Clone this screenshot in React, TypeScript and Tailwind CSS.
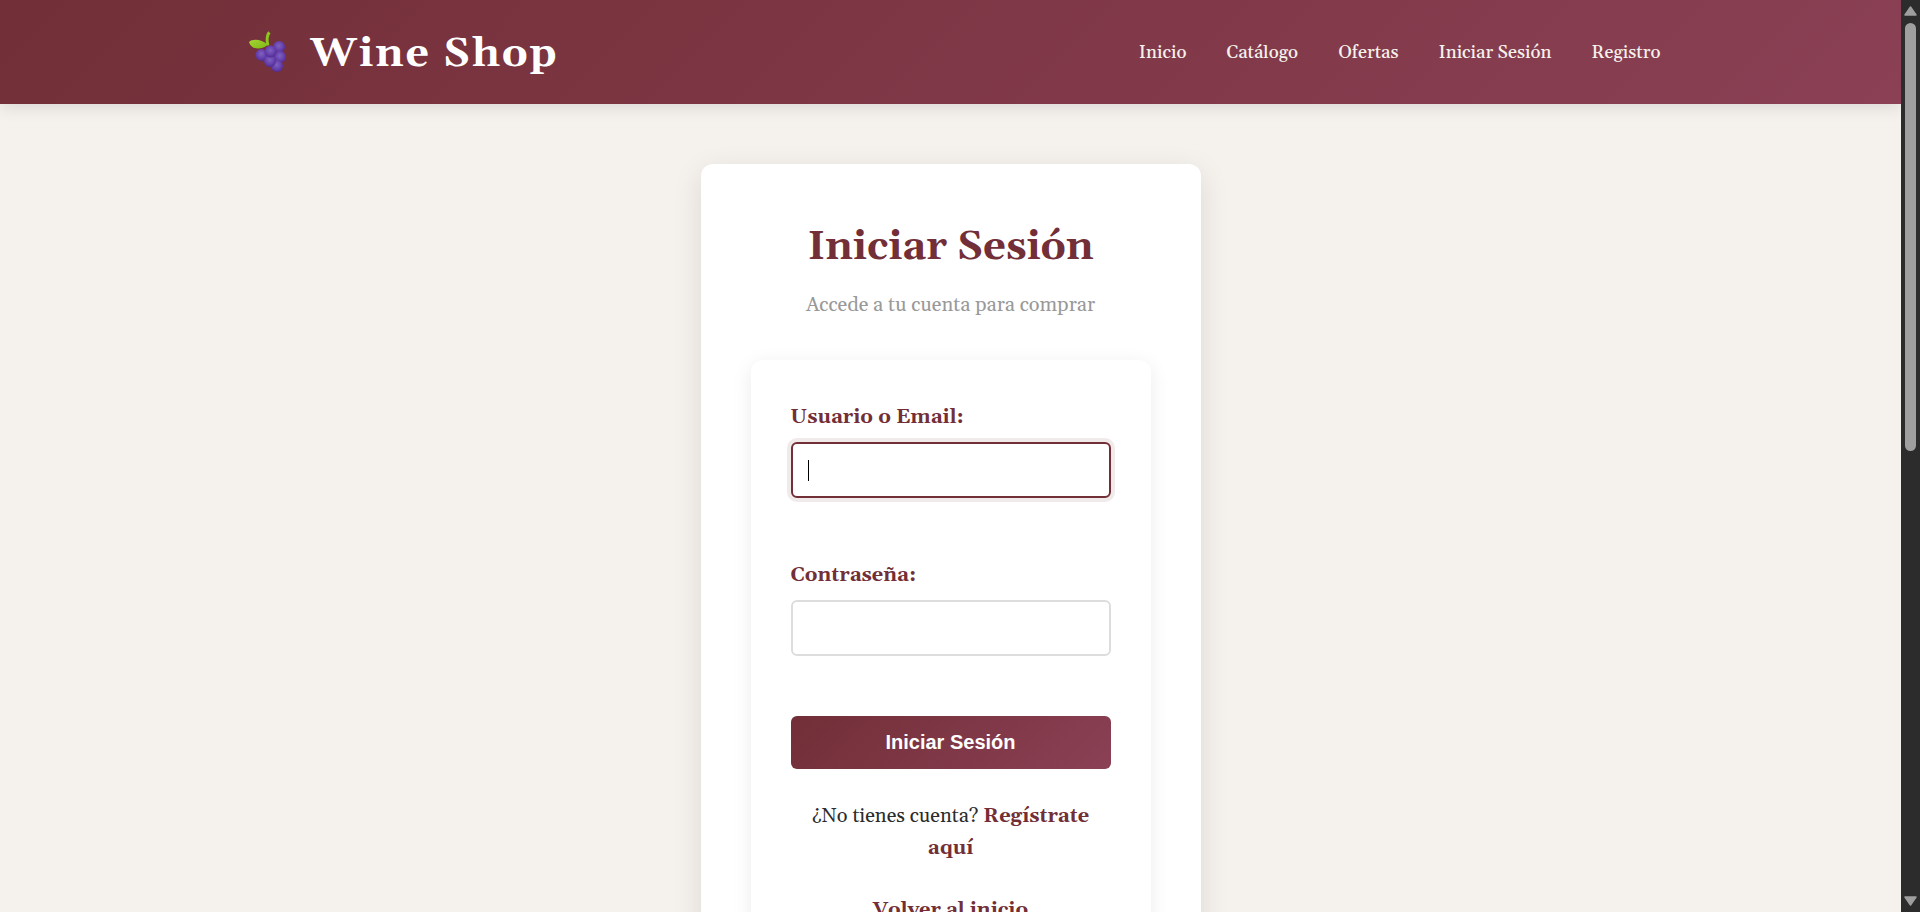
const links = ['Inicio', 'Catálogo', 'Ofertas', 'Iniciar Sesión', 'Registro'];

const berries = [
  [32, 17],
  [33, 27],
  [14.5, 25],
  [30, 36],
  [23, 31],
  [23.5, 21.5],
];

function Grapes() {
  return (
    <svg viewBox="0 0 40 44" className="h-11 w-10" aria-hidden="true">
      <defs>
        <radialGradient id="berry" cx="0.48" cy="0.4" r="0.62">
          <stop offset="0" stopColor="#7f62c0" />
          <stop offset="0.6" stopColor="#6640ab" />
          <stop offset="1" stopColor="#4f2a93" />
        </radialGradient>
        <linearGradient id="leaf" x1="0" y1="0" x2="1" y2="1">
          <stop offset="0" stopColor="#a5d335" />
          <stop offset="1" stopColor="#7fb914" />
        </linearGradient>
      </defs>
      {berries.map(([x, y]) => (
        <circle key={`${x}-${y}`} cx={x} cy={y} r="6" fill="url(#berry)" />
      ))}
      <path d="M2 12C5 8.500 15 9 20.500 14.500C16 20 4 20.500 2 12Z" fill="url(#leaf)" />
      <path d="M20.800 15.500C19.500 9.500 20 5 22.300 2.200" fill="none" stroke="#8cc51e" strokeWidth="3" />
    </svg>
  );
}

const label = 'block text-[20px] leading-[34px] font-bold text-[#722f37]';
const field =
  'block h-14 w-full rounded-md border-2 border-[#ddd] bg-white px-[15px] text-lg text-black outline-none focus:border-[#722f37] focus:shadow-[0_0_0_4px_rgba(114,47,55,0.1)]';

export default function App() {
  return (
    <div className="flex h-screen bg-[#f5f1ed] font-[Gelasio,Georgia,'Liberation_Serif',serif] text-[#2c2c2c]">
      <div className="min-w-0 flex-1 overflow-y-auto [scrollbar-width:none]">
        <header className="relative bg-linear-135 from-[#722f37] to-[#8b4055] shadow-[0_4px_15px_rgba(0,0,0,0.1)]">
          <div className="mx-auto flex h-26 max-w-[1500px] items-center justify-between px-10">
            <a href="#inicio" className="flex items-center gap-6 pl-1.5 text-white">
              <Grapes />
              <span className="pt-1 text-[41px] leading-none font-bold tracking-[2px]">Wine Shop</span>
            </a>
            <nav className="flex gap-10 pt-0.5 text-[18px] leading-8 font-medium text-[#f5f1eb]">
              {links.map((text) => (
                <a key={text} href="#seccion">
                  {text}
                </a>
              ))}
            </nav>
          </div>
        </header>
        <main className="px-5 py-15">
          <section className="mx-auto max-w-[500px] rounded-xl bg-white p-[50px] shadow-[0_8px_30px_rgba(0,0,0,0.1)]">
            <h1 className="text-center text-[40px] leading-17 font-bold text-[#722f37]">Iniciar Sesión</h1>
            <p className="mt-1.5 text-center text-[20px] leading-[34px] text-[#999]">Accede a tu cuenta para comprar</p>
            <form className="mt-[38px] rounded-xl bg-white p-10 shadow-[0_4px_20px_rgba(0,0,0,0.08)]">
              <label htmlFor="user" className={label}>
                Usuario o Email:
              </label>
              <div className="relative mt-2">
                <input id="user" type="text" autoFocus className={`caret-transparent ${field}`} />
                <span className="pointer-events-none absolute top-[18px] left-[17px] h-[21px] w-px bg-black" />
              </div>
              <label htmlFor="password" className={`mt-15 ${label}`}>
                Contraseña:
              </label>
              <div className="mt-2">
                <input id="password" type="password" className={field} />
              </div>
              <button
                type="button"
                className="mt-15 block h-[53px] w-full rounded-md bg-linear-135 from-[#722f37] to-[#8b4055] pb-0.5 font-['Liberation_Sans',Arial,sans-serif] text-[20px] leading-6 font-bold text-white"
              >
                Iniciar Sesión
              </button>
              <div className="mt-[31px] text-center text-[20px] leading-8">
                <p>
                  ¿No tienes cuenta?{' '}
                  <a href="#registro" className="font-bold text-[#722f37]">
                    Regístrate aquí
                  </a>
                </p>
                <p className="mt-[30px]">
                  <a href="#inicio" className="font-bold text-[#722f37]">
                    Volver al inicio
                  </a>
                </p>
              </div>
            </form>
          </section>
        </main>
      </div>
      <div className="flex w-[19px] flex-col items-center justify-between bg-[#2c2c2c] py-1.5" aria-hidden="true">
        <svg viewBox="0 0 13 10" className="h-2.5 w-[13px]">
          <path d="M6.500 1L12 9H1Z" fill="#9f9f9f" stroke="#9f9f9f" strokeWidth="1.500" strokeLinejoin="round" />
        </svg>
        <div className="flex w-full flex-1 justify-center pt-[7px]">
          <div className="h-[49%] w-[11px] rounded-full bg-[#9f9f9f]" />
        </div>
        <svg viewBox="0 0 13 10" className="h-2.5 w-[13px]">
          <path d="M6.500 9L12 1H1Z" fill="#9f9f9f" stroke="#9f9f9f" strokeWidth="1.500" strokeLinejoin="round" />
        </svg>
      </div>
    </div>
  );
}
